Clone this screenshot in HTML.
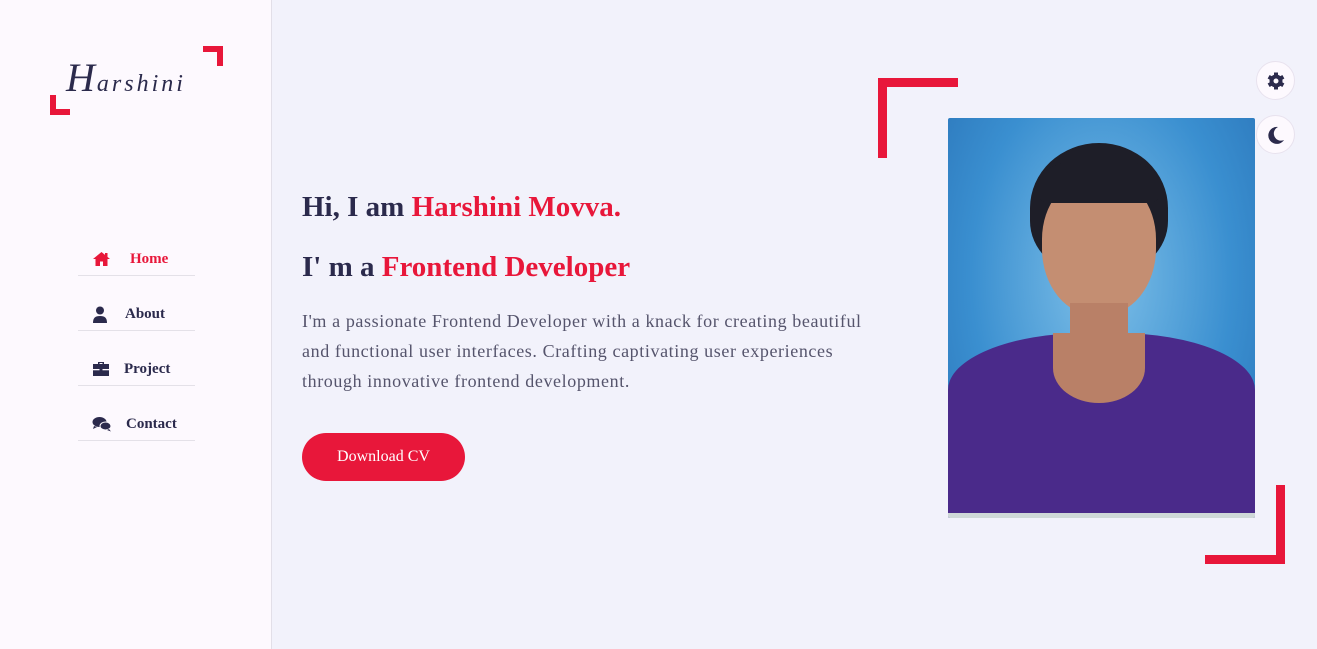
<!DOCTYPE html>
<html><head><meta charset="utf-8"><style>
*{margin:0;padding:0;box-sizing:border-box}
body{width:1317px;height:649px;overflow:hidden;background:#f2f2fb;font-family:"Liberation Serif",serif;position:relative}
.side{position:absolute;left:0;top:0;width:272px;height:649px;background:#fdf9fe;border-right:1px solid #e2dfe8}
.br{position:absolute;background:#e8173a}
.logo{position:absolute;left:66px;top:54px;font-family:"Liberation Serif",serif;font-style:italic;font-size:40px;color:#2b2a4c;letter-spacing:2px}
.logo span{font-size:24px;letter-spacing:3px}
.nav{position:absolute;left:78px;width:117px;height:55px;border-bottom:1px solid #e4e1e8;font-weight:bold;font-size:15px;color:#2b2a4c}
.nav svg{position:absolute;left:14px;top:30px}
.nav b{position:absolute;top:30px}
h2{position:absolute;left:302px;font-size:29px;color:#2b2a4c;font-weight:bold}
h2 span{color:#e8173a}
p{position:absolute;left:302px;top:306px;width:592px;font-size:18px;letter-spacing:0.6px;line-height:30px;color:#55546c}
.btn{position:absolute;left:302px;top:433px;width:163px;height:48px;border-radius:24px;background:#e8173a;color:#fff;font-size:16px;text-align:center;line-height:48px}
.circ{position:absolute;left:1256px;width:39px;height:39px;border-radius:50%;background:#fdf9fe;border:1px solid #e8e2ee}
.circ svg{position:absolute;left:9px;top:9px}
.photo{position:absolute;left:948px;top:118px;width:307px;height:400px;overflow:hidden;background:radial-gradient(ellipse at 50% 40%,#7fc0e8,#3a8fd0 60%,#2a74b8);border-radius:2px}
.photo div{position:absolute}
</style></head><body>
<div class="side">
<div class="br" style="left:50px;top:95px;width:6px;height:20px"></div>
<div class="br" style="left:50px;top:109px;width:20px;height:6px"></div>
<div class="br" style="left:203px;top:46px;width:20px;height:6px"></div>
<div class="br" style="left:217px;top:46px;width:6px;height:20px"></div>
<div class="logo">H<span>arshini</span></div>
<div class="nav" style="top:221px;color:#e8173a"><svg width="19" height="16" viewBox="0 0 19 16"><path d="M9.5 1L1 8h2.5v7h4.5v-4.5h3V15h4.5V8H18z" fill="#e8173a"/><rect x="13" y="2" width="2.5" height="4" fill="#e8173a"/></svg><b style="left:52px">Home</b></div>
<div class="nav" style="top:276px"><svg width="16" height="17" viewBox="0 0 16 17"><circle cx="8" cy="4.5" r="4" fill="#2b2a4c"/><path d="M1 17c0-5 2-7 7-7s7 2 7 7z" fill="#2b2a4c"/></svg><b style="left:47px">About</b></div>
<div class="nav" style="top:331px"><svg width="18" height="16" viewBox="0 0 18 16"><path d="M6 3V1h6v2h5v12H1V3zM7.5 2v1h3V2z" fill="#2b2a4c" fill-rule="evenodd"/><rect x="1" y="8" width="16" height="1.3" fill="#fdf9fe"/><rect x="7.5" y="7" width="3" height="3" fill="#2b2a4c"/></svg><b style="left:46px">Project</b></div>
<div class="nav" style="top:386px"><svg width="20" height="16" viewBox="0 0 20 16"><ellipse cx="7.5" cy="6" rx="7" ry="5" fill="#2b2a4c"/><path d="M2 10l-1 3 4-2z" fill="#2b2a4c"/><ellipse cx="13.5" cy="10" rx="5.5" ry="4" fill="#2b2a4c" stroke="#fdf9fe" stroke-width="1"/><path d="M17 13l2 2.5-4-1.5z" fill="#2b2a4c"/></svg><b style="left:48px">Contact</b></div>
</div>
<h2 style="top:191px">Hi, I am <span>Harshini Movva.</span></h2>
<h2 style="top:251px">I' m a <span>Frontend Developer</span></h2>
<p>I'm a passionate Frontend Developer with a knack for creating beautiful and functional user interfaces. Crafting captivating user experiences through innovative frontend development.</p>
<div class="btn">Download CV</div>
<div class="br" style="left:878px;top:78px;width:80px;height:9px"></div>
<div class="br" style="left:878px;top:78px;width:9px;height:80px"></div>
<div class="br" style="left:1205px;top:555px;width:80px;height:9px"></div>
<div class="br" style="left:1276px;top:485px;width:9px;height:79px"></div>
<div class="photo">
<div style="left:82px;top:25px;width:138px;height:130px;border-radius:50% 50% 40% 40%;background:#1e1e28"></div>
<div style="left:94px;top:58px;width:114px;height:140px;border-radius:45% 45% 48% 48%;background:#c48e72"></div>
<div style="left:92px;top:40px;width:118px;height:45px;border-radius:50% 50% 10% 10%;background:#1e1e28"></div>
<div style="left:122px;top:185px;width:58px;height:60px;background:#b98067"></div>
<div style="left:0;top:215px;width:307px;height:190px;border-radius:45% 45% 0 0/30% 30% 0 0;background:#4a2a8a"></div>
<div style="left:105px;top:215px;width:92px;height:70px;border-radius:0 0 50% 50%;background:#b98067"></div>
<div style="left:0;top:395px;width:307px;height:5px;background:#cfd8d8"></div>
</div>
<div class="circ" style="top:61px"><svg width="20" height="20" viewBox="0 0 20 20"><g fill="#2b2a4c"><circle cx="10" cy="10" r="6.5"/><rect x="8" y="1.5" width="4" height="17"/><rect x="8" y="1.5" width="4" height="17" transform="rotate(60 10 10)"/><rect x="8" y="1.5" width="4" height="17" transform="rotate(120 10 10)"/></g><circle cx="10" cy="10" r="2.5" fill="#fdf9fe"/></svg></div>
<div class="circ" style="top:115px"><svg width="20" height="20" viewBox="0 0 20 20"><path d="M12 2A8.5 8.5 0 1 0 18 15 7 7 0 0 1 12 2z" fill="#2b2a4c"/></svg></div>
</body></html>
